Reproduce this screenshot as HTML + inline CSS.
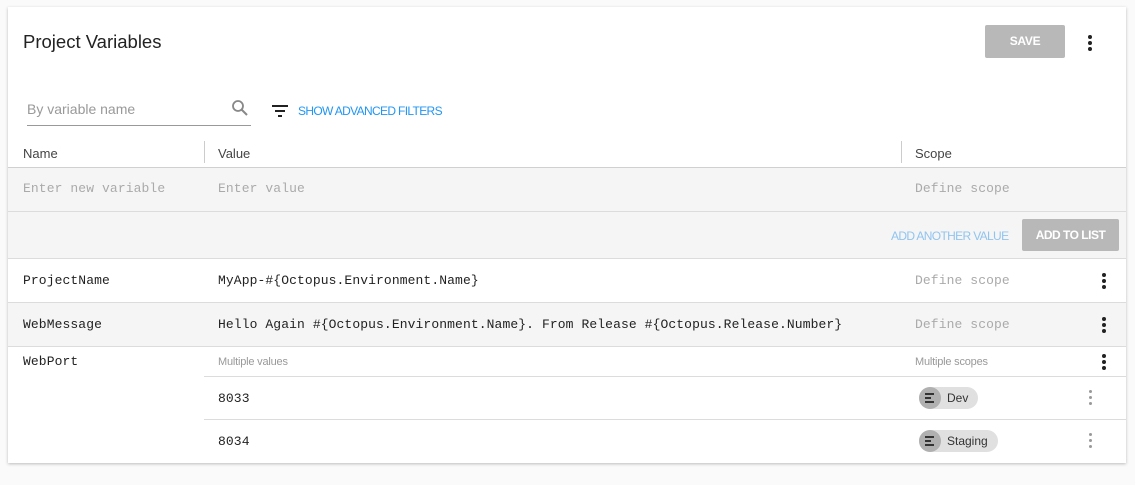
<!DOCTYPE html>
<html><head><style>
*{margin:0;padding:0;box-sizing:border-box}
body{width:1135px;height:485px;background:#fafafa;font-family:"Liberation Sans",sans-serif;position:relative;overflow:hidden}
.card{position:absolute;left:8px;top:7px;width:1118px;height:456px;background:#fff;box-shadow:0 1px 3px rgba(0,0,0,.25)}
.a{position:absolute;white-space:nowrap}
.m{font-family:"Liberation Mono",monospace;font-size:13px;letter-spacing:0.1px}
.hl{position:absolute;height:1px;background:#dcdcdc}
.dots{position:absolute;width:4px}
.dots i{display:block;width:4px;height:4px;border-radius:2px;background:#222;margin-bottom:2px}
.dots.g i{width:3px;height:3px;background:#999;margin-bottom:3px}
.chip{position:absolute;height:22px;border-radius:11px;background:#e0e0e0;font-size:12px;color:#333;line-height:22px;padding-left:28px;padding-right:10px}
.chip b{position:absolute;left:0;top:0;width:22px;height:22px;border-radius:11px;background:#b0b0b0}
.chip b i{position:absolute;left:6px;height:2px;background:#333}
</style></head><body>
<div class="card">
<div class="a" style="left:15px;top:24px;font-size:18.5px;color:#222">Project Variables</div>
<div class="a" style="left:977px;top:18px;width:80px;height:33px;background:#b8b8b8;border-radius:2px;color:#fff;font-weight:bold;font-size:12px;text-align:center;line-height:33px;letter-spacing:-0.3px">SAVE</div>
<div class="dots" style="left:1080px;top:28px"><i></i><i></i><i></i></div>
<div class="a" style="left:19px;top:94px;font-size:14px;color:#999">By variable name</div>
<svg class="a" style="left:223px;top:92px" width="18" height="18" viewBox="0 0 18 18"><circle cx="7" cy="7" r="5" fill="none" stroke="#888" stroke-width="1.8"/><path d="M10.5 10.5L16 16" stroke="#888" stroke-width="2"/></svg>
<div class="hl" style="left:19px;top:118px;width:224px;background:#999"></div>
<svg class="a" style="left:264px;top:98px" width="16" height="12"><rect x="0" y="0" width="16" height="2" fill="#222"/><rect x="3" y="5" width="10" height="2" fill="#222"/><rect x="6" y="10" width="4" height="2" fill="#222"/></svg>
<div class="a" style="left:290px;top:97px;font-size:12px;color:#2196f3;letter-spacing:-0.65px">SHOW ADVANCED FILTERS</div>
<div class="a" style="left:15px;top:139px;font-size:13px;color:#444">Name</div>
<div class="a" style="left:196px;top:134px;width:1px;height:22px;background:#ccc"></div>
<div class="a" style="left:210px;top:139px;font-size:13px;color:#444">Value</div>
<div class="a" style="left:893px;top:134px;width:1px;height:22px;background:#ccc"></div>
<div class="a" style="left:907px;top:139px;font-size:13px;color:#444">Scope</div>
<div class="a" style="left:0;top:160px;width:1118px;height:91px;background:#f5f5f5"></div>
<div class="hl" style="left:0;top:160px;width:1118px;background:#d0d0d0"></div>
<div class="hl" style="left:0;top:204px;width:1118px"></div>
<div class="a m" style="left:15px;top:174px;color:#aaa">Enter new variable</div>
<div class="a m" style="left:210px;top:174px;color:#aaa">Enter value</div>
<div class="a m" style="left:907px;top:174px;color:#aaa">Define scope</div>
<div class="a" style="left:883px;top:222px;font-size:12px;color:#90c4f0;letter-spacing:-0.65px">ADD ANOTHER VALUE</div>
<div class="a" style="left:1014px;top:212px;width:97px;height:32px;background:#b8b8b8;border-radius:2px;color:#fff;font-weight:bold;font-size:12px;text-align:center;line-height:32px;letter-spacing:-0.5px">ADD TO LIST</div>
<div class="hl" style="left:0;top:251px;width:1118px"></div>
<div class="a m" style="left:15px;top:266px;color:#222">ProjectName</div>
<div class="a m" style="left:210px;top:266px;color:#222">MyApp-#{Octopus.Environment.Name}</div>
<div class="a m" style="left:907px;top:266px;color:#aaa">Define scope</div>
<div class="dots" style="left:1094px;top:266px"><i></i><i></i><i></i></div>
<div class="a" style="left:0;top:295px;width:1118px;height:44px;background:#f5f5f5"></div>
<div class="hl" style="left:0;top:295px;width:1118px"></div>
<div class="a m" style="left:15px;top:310px;color:#222">WebMessage</div>
<div class="a m" style="left:210px;top:310px;color:#222">Hello Again #{Octopus.Environment.Name}. From Release #{Octopus.Release.Number}</div>
<div class="a m" style="left:907px;top:310px;color:#aaa">Define scope</div>
<div class="dots" style="left:1094px;top:310px"><i></i><i></i><i></i></div>
<div class="hl" style="left:0;top:339px;width:1118px"></div>
<div class="a m" style="left:15px;top:347px;color:#222">WebPort</div>
<div class="a" style="left:210px;top:349px;font-size:11px;color:#999;letter-spacing:-0.2px">Multiple values</div>
<div class="a" style="left:907px;top:349px;font-size:11px;color:#999;letter-spacing:-0.2px">Multiple scopes</div>
<div class="dots" style="left:1094px;top:347px"><i></i><i></i><i></i></div>
<div class="hl" style="left:196px;top:369px;width:922px"></div>
<div class="a m" style="left:210px;top:384px;color:#222">8033</div>
<div class="chip" style="left:911px;top:380px"><b><i style="top:6px;width:9px"></i><i style="top:10px;width:6px"></i><i style="top:14px;width:9px"></i></b>Dev</div>
<div class="dots g" style="left:1081px;top:383px"><i></i><i></i><i></i></div>
<div class="hl" style="left:196px;top:412px;width:922px"></div>
<div class="a m" style="left:210px;top:427px;color:#222">8034</div>
<div class="chip" style="left:911px;top:423px"><b><i style="top:6px;width:9px"></i><i style="top:10px;width:6px"></i><i style="top:14px;width:9px"></i></b>Staging</div>
<div class="dots g" style="left:1081px;top:426px"><i></i><i></i><i></i></div>
</div>
</body></html>
